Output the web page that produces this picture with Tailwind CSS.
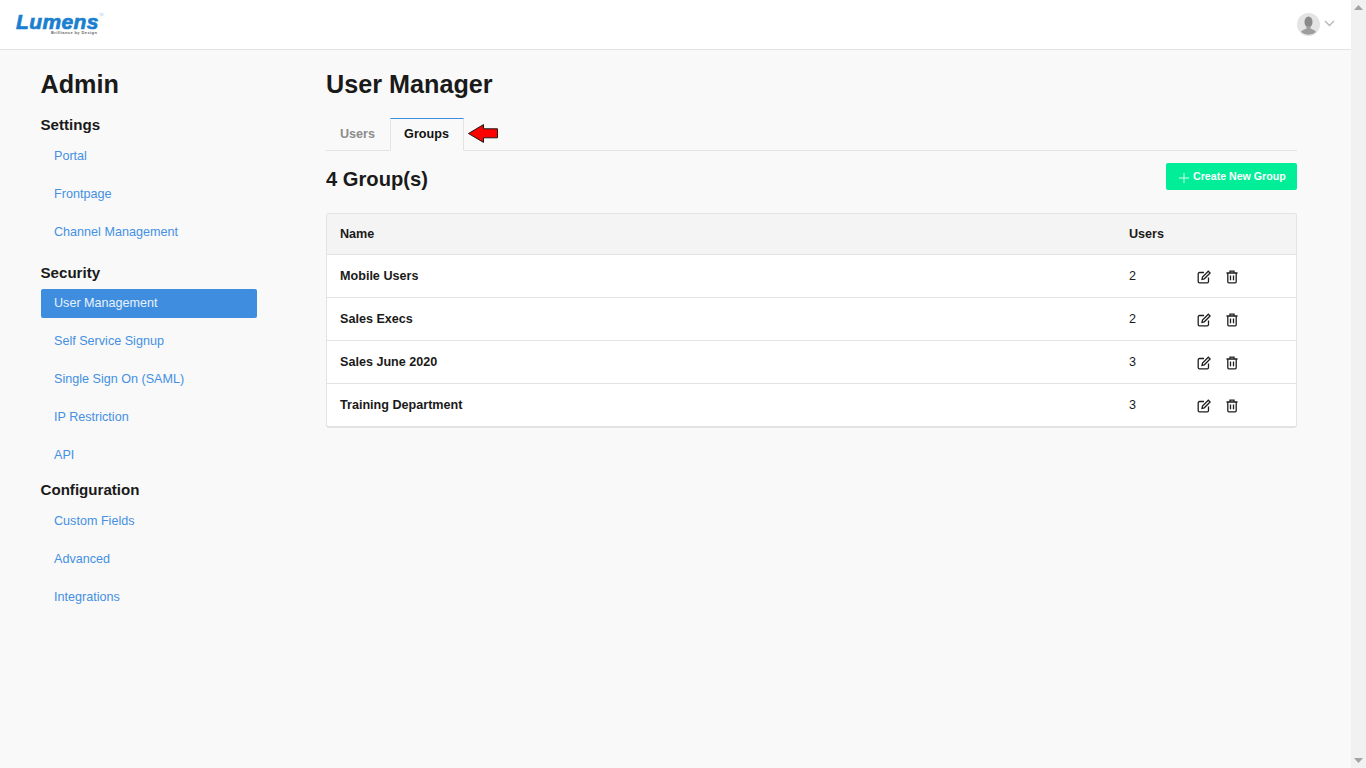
<!DOCTYPE html>
<html lang="en">
<head>
    <meta charset="UTF-8">
    <meta name="viewport" content="width=device-width, initial-scale=1.0">
    <title>User Manager</title>
    <script src="https://cdn.jsdelivr.net/npm/@tailwindcss/browser@4"></script>
</head>
<body class="h-[768px] overflow-hidden bg-[#f9f9f9] font-['Liberation_Sans',Arial,sans-serif] text-[#1a1a1a]">
<div class="flex h-[768px]">
    <div class="w-[1351px] h-full">
        <!-- top bar -->
        <header class="h-[50px] bg-white border-b border-[#e3e3e3] flex items-center justify-between pl-[16px] pr-[15px]">
            <div class="w-[90px] h-[26px] flex flex-col items-start mt-[2px]">
                <div class="flex items-start h-[17px]">
                    <span class="text-[21px] leading-[17px] font-bold italic text-[#1b7fd0] tracking-[0.4px] [-webkit-text-stroke:0.7px_#1b7fd0]">Lumens</span>
                    <span class="text-[3px] leading-[4px] text-[#9cc4e6]">TM</span>
                </div>
                <span class="text-[4px] leading-[5px] font-bold text-[#666] ml-[35px] tracking-[0.4px] whitespace-nowrap">Brilliance by Design</span>
            </div>
            <div class="flex items-center gap-[4px]">
                <svg class="w-[23px] h-[23px]" viewBox="0 0 23 23">
                    <circle cx="11.5" cy="11.5" r="11.5" fill="#e4e4e4"/>
                    <ellipse cx="11.5" cy="9" rx="4" ry="5.6" fill="#8a8a8a"/>
                    <path d="M9.5 13h4v2.5c2.2 1 4.5 1.600 5.500 3.500a11.500 11.500 0 0 1-15 0c1-1.900 3.300-2.500 5.500-3.500z" fill="#9d9d9d"/>
                </svg>
                <svg class="w-[11px] h-[7px] mr-[1px] mb-[2px]" viewBox="0 0 11 7" fill="none" stroke="#b5b5b5" stroke-width="1.300"><path d="M1 1l4.500 4.500L10 1"/></svg>
            </div>
        </header>

        <div class="flex">
            <!-- sidebar -->
            <aside class="w-[326px] pl-[40px] shrink-0">
                <h1 class="text-[25.2px] leading-[32px] font-bold mt-[18px] pl-[0.5px]">Admin</h1>
                <h3 class="text-[15.12px] leading-[18px] font-bold mt-[16px] mb-[8px] pl-[0.5px]">Settings</h3>
                <nav class="w-[217px] flex flex-col gap-[9px] text-[12.6px] text-[#4490e2]">
                    <a class="h-[29px] flex items-center pl-[14px] pb-[1px]">Portal</a>
                    <a class="h-[29px] flex items-center pl-[14px] pb-[1px]">Frontpage</a>
                    <a class="h-[29px] flex items-center pl-[14px] pb-[1px]">Channel Management</a>
                </nav>
                <h3 class="text-[15.12px] leading-[18px] font-bold mt-[17px] mb-[7px] pl-[0.5px]">Security</h3>
                <nav class="w-[217px] flex flex-col gap-[9px] text-[12.6px] text-[#4490e2]">
                    <a class="h-[29px] flex items-center pl-[13px] pb-[1px] ml-[1px] w-[216px] rounded-[2px] bg-[#3f8ddf] text-[#e8f2fc]">User Management</a>
                    <a class="h-[29px] flex items-center pl-[14px] pb-[1px]">Self Service Signup</a>
                    <a class="h-[29px] flex items-center pl-[14px] pb-[1px]">Single Sign On (SAML)</a>
                    <a class="h-[29px] flex items-center pl-[14px] pb-[1px]">IP Restriction</a>
                    <a class="h-[29px] flex items-center pl-[14px] pb-[1px]">API</a>
                </nav>
                <h3 class="text-[15.12px] leading-[18px] font-bold mt-[11px] mb-[8px] pl-[0.5px]">Configuration</h3>
                <nav class="w-[217px] flex flex-col gap-[9px] text-[12.6px] text-[#4490e2]">
                    <a class="h-[29px] flex items-center pl-[14px] pb-[1px]">Custom Fields</a>
                    <a class="h-[29px] flex items-center pl-[14px] pb-[1px]">Advanced</a>
                    <a class="h-[29px] flex items-center pl-[14px] pb-[1px]">Integrations</a>
                </nav>
            </aside>

            <!-- main -->
            <main class="w-[971px] shrink-0">
                <h1 class="text-[25.2px] leading-[32px] font-bold mt-[18px]">User Manager</h1>
                <div class="flex items-center h-[33px] mt-[18px] border-b border-[#e3e3e3]">
                    <span class="w-[64px] pl-[14px] text-[12.6px] font-bold text-[#8c8c8c]">Users</span>
                    <span class="w-[74px] h-[33px] -mb-[1px] pb-[1px] pr-[1px] flex items-center justify-center bg-[#f9f9f9] border border-[#e3e3e3] border-t-[#3f8ddf] border-b-[#f9f9f9] text-[12.6px] font-bold text-[#111]">Groups</span>
                    <svg class="ml-[4px] mb-[2px] w-[30px] h-[19px]" viewBox="0 0 30 19">
                        <path d="M0.500 9.500L15.500 0.600V4.800H29.500V13.800H15.500V18.400z" fill="#ff0000" stroke="#1a1a1a" stroke-width="1"/>
                    </svg>
                </div>
                <div class="flex items-start justify-between mt-[12px]">
                    <h2 class="text-[20.16px] leading-[26px] font-bold mt-[3px]">4 Group(s)</h2>
                    <button class="w-[131px] h-[27px] rounded-[2px] bg-[#00ee98] text-white text-[10.64px] font-bold flex items-center pl-[13px] gap-[4px]">
                        <svg class="w-[10px] h-[10px] mt-[2px]" viewBox="0 0 10 10" stroke="#d8fdec" stroke-width="1"><path d="M5 0v10M0 5h10"/></svg>
                        <span>Create New Group</span>
                    </button>
                </div>

                <div class="mt-[21px] border border-[#e3e3e3] border-b-2 rounded-[3px] bg-white overflow-hidden text-[12.6px]">
                    <div class="flex items-center h-[41px] bg-[#f4f4f4] border-b border-[#e3e3e3] font-bold">
                        <span class="w-[802px] pl-[13px]">Name</span>
                        <span>Users</span>
                    </div>
                    <div class="flex items-center h-[43px] border-b border-[#e3e3e3]">
                        <span class="w-[802px] pl-[13px] font-bold">Mobile Users</span>
                        <span class="w-[68px]">2</span>
                        <span class="flex gap-[14px] items-center mt-[2px]">
                            <svg class="w-[14px] h-[14px]" viewBox="0 0 14 14" fill="none" stroke="#1f1f1f" stroke-width="1.300"><path d="M7 2.500H2.500A1.300 1.300 0 0 0 1.200 3.800v7.700a1.300 1.300 0 0 0 1.300 1.300h7.700a1.300 1.300 0 0 0 1.300-1.300V7.500"/><path d="M5 9.300l.5-2.300L11.300 1.200l1.800 1.800L7.300 8.800z"/></svg>
                            <svg class="w-[14px] h-[14px]" viewBox="0 0 14 14" fill="none" stroke="#1f1f1f" stroke-width="1.300"><path d="M1.500 3h11M5 3V1.200h4V3M2.800 3v8.800a1 1 0 0 0 1 1h6.400a1 1 0 0 0 1-1V3M5.500 5.500v4.800M8.500 5.500v4.800"/></svg>
                        </span>
                    </div>
                    <div class="flex items-center h-[43px] border-b border-[#e3e3e3]">
                        <span class="w-[802px] pl-[13px] font-bold">Sales Execs</span>
                        <span class="w-[68px]">2</span>
                        <span class="flex gap-[14px] items-center mt-[2px]">
                            <svg class="w-[14px] h-[14px]" viewBox="0 0 14 14" fill="none" stroke="#1f1f1f" stroke-width="1.300"><path d="M7 2.500H2.500A1.300 1.300 0 0 0 1.200 3.800v7.700a1.300 1.300 0 0 0 1.300 1.300h7.700a1.300 1.300 0 0 0 1.300-1.300V7.500"/><path d="M5 9.300l.5-2.300L11.300 1.200l1.800 1.800L7.300 8.800z"/></svg>
                            <svg class="w-[14px] h-[14px]" viewBox="0 0 14 14" fill="none" stroke="#1f1f1f" stroke-width="1.300"><path d="M1.500 3h11M5 3V1.200h4V3M2.800 3v8.800a1 1 0 0 0 1 1h6.400a1 1 0 0 0 1-1V3M5.500 5.500v4.800M8.500 5.500v4.800"/></svg>
                        </span>
                    </div>
                    <div class="flex items-center h-[43px] border-b border-[#e3e3e3]">
                        <span class="w-[802px] pl-[13px] font-bold">Sales June 2020</span>
                        <span class="w-[68px]">3</span>
                        <span class="flex gap-[14px] items-center mt-[2px]">
                            <svg class="w-[14px] h-[14px]" viewBox="0 0 14 14" fill="none" stroke="#1f1f1f" stroke-width="1.300"><path d="M7 2.500H2.500A1.300 1.300 0 0 0 1.200 3.800v7.700a1.300 1.300 0 0 0 1.300 1.300h7.700a1.300 1.300 0 0 0 1.300-1.300V7.500"/><path d="M5 9.300l.5-2.300L11.300 1.200l1.800 1.800L7.300 8.800z"/></svg>
                            <svg class="w-[14px] h-[14px]" viewBox="0 0 14 14" fill="none" stroke="#1f1f1f" stroke-width="1.300"><path d="M1.500 3h11M5 3V1.200h4V3M2.800 3v8.800a1 1 0 0 0 1 1h6.400a1 1 0 0 0 1-1V3M5.500 5.500v4.800M8.500 5.500v4.800"/></svg>
                        </span>
                    </div>
                    <div class="flex items-center h-[42px]">
                        <span class="w-[802px] pl-[13px] font-bold">Training Department</span>
                        <span class="w-[68px]">3</span>
                        <span class="flex gap-[14px] items-center mt-[2px]">
                            <svg class="w-[14px] h-[14px]" viewBox="0 0 14 14" fill="none" stroke="#1f1f1f" stroke-width="1.300"><path d="M7 2.500H2.500A1.300 1.300 0 0 0 1.200 3.800v7.700a1.300 1.300 0 0 0 1.300 1.300h7.700a1.300 1.300 0 0 0 1.300-1.300V7.500"/><path d="M5 9.300l.5-2.300L11.300 1.200l1.800 1.800L7.300 8.800z"/></svg>
                            <svg class="w-[14px] h-[14px]" viewBox="0 0 14 14" fill="none" stroke="#1f1f1f" stroke-width="1.300"><path d="M1.500 3h11M5 3V1.200h4V3M2.800 3v8.800a1 1 0 0 0 1 1h6.400a1 1 0 0 0 1-1V3M5.500 5.500v4.800M8.500 5.500v4.800"/></svg>
                        </span>
                    </div>
                </div>
            </main>
        </div>
    </div>

    <!-- scrollbar -->
    <div class="w-[15px] h-full bg-[#f1f1f1] flex flex-col items-center justify-between py-[5px]">
        <svg class="w-[9px] h-[5px]" viewBox="0 0 9 5" fill="#a3a3a3"><path d="M4.500 0L9 5H0z"/></svg>
        <svg class="w-[9px] h-[5px]" viewBox="0 0 9 5" fill="#a3a3a3"><path d="M4.500 5L9 0H0z"/></svg>
    </div>
</div>
</body>
</html>
